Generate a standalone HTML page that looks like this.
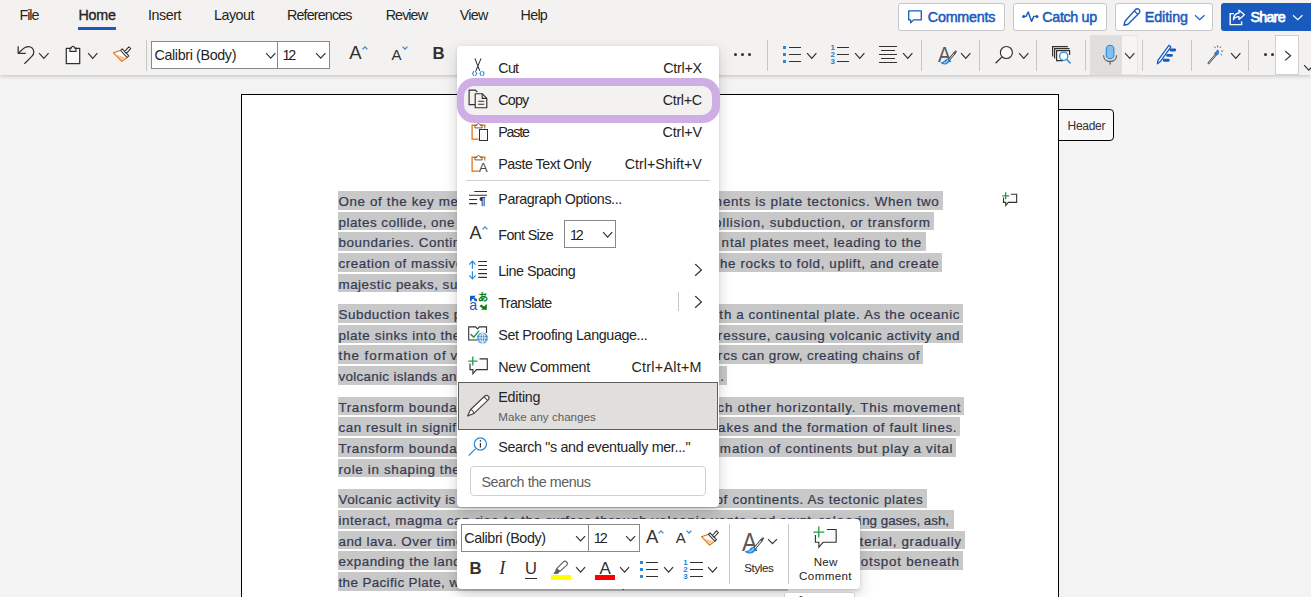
<!DOCTYPE html>
<html lang="en"><head><meta charset="utf-8"><title>Document - Word</title>
<style>
html,body{margin:0;padding:0;}
body{width:1311px;height:597px;overflow:hidden;background:#f3f3f3;font-family:"Liberation Sans",sans-serif;}
#root{position:relative;width:1311px;height:597px;overflow:hidden;}
.t{position:absolute;white-space:pre;}
.d{-webkit-text-stroke:.22px;}
.b{position:absolute;box-sizing:border-box;}
svg{overflow:visible;}

</style></head>
<body>
<div id="root">
<div class="b" style="left:241px;top:94px;width:818px;height:520px;background:#fff;border:1px solid #000;"></div>
<div class="b" style="left:1058px;top:109px;width:56px;height:32px;background:#f8f8f8;border:1px solid #000;border-radius:0 4px 4px 0;"></div>
<span class="t" style="letter-spacing:-0.272px;top:117.74px;font-size:12px;line-height:17px;color:#323130;left:1067.50px;">Header</span>
<div class="b" style="left:338.2px;top:191.0px;width:605.0px;height:18.6px;background:#c8c8c8;"></div>
<span class="t d" style="letter-spacing:0.629px;top:192.16px;font-size:13.4px;line-height:19px;color:#343a52;left:338.50px;">One of the key m</span>
<span class="t d" style="top:192.16px;font-size:13.4px;line-height:19px;color:#343a52;left:450.50px;letter-spacing:.5px;max-width:261.5px;overflow:hidden;">echanisms behind the formation of conti</span>
<span class="t d" style="top:192.16px;font-size:13.4px;line-height:19px;color:#343a52;right:588.60px;letter-spacing:.5px;">n</span>
<span class="t d" style="letter-spacing:0.653px;top:192.16px;font-size:13.4px;line-height:19px;color:#343a52;left:722.90px;">ents is plate tectonics. When two</span>
<div class="b" style="left:338.2px;top:211.7px;width:595.6px;height:18.6px;background:#c8c8c8;"></div>
<span class="t d" style="letter-spacing:0.483px;top:212.86px;font-size:13.4px;line-height:19px;color:#343a52;left:338.50px;">plates collide, one</span>
<span class="t d" style="top:212.86px;font-size:13.4px;line-height:19px;color:#343a52;left:455.00px;letter-spacing:.5px;max-width:257.0px;overflow:hidden;"> of three things can happen: continental c</span>
<span class="t d" style="top:212.86px;font-size:13.4px;line-height:19px;color:#343a52;right:589.00px;letter-spacing:.5px;">o</span>
<span class="t d" style="letter-spacing:0.690px;top:212.86px;font-size:13.4px;line-height:19px;color:#343a52;left:722.50px;">llision, subduction, or transform</span>
<div class="b" style="left:338.2px;top:232.3px;width:587.5px;height:18.6px;background:#c8c8c8;"></div>
<span class="t d" style="letter-spacing:0.546px;top:233.46px;font-size:13.4px;line-height:19px;color:#343a52;left:338.50px;">boundaries. Conti</span>
<span class="t d" style="top:233.46px;font-size:13.4px;line-height:19px;color:#343a52;left:452.80px;letter-spacing:.5px;max-width:259.2px;overflow:hidden;">nental collision occurs when two contine</span>
<span class="t d" style="top:233.46px;font-size:13.4px;line-height:19px;color:#343a52;right:581.60px;letter-spacing:.5px;">n</span>
<span class="t d" style="letter-spacing:0.549px;top:233.46px;font-size:13.4px;line-height:19px;color:#343a52;left:729.90px;">tal plates meet, leading to the</span>
<div class="b" style="left:338.2px;top:253.0px;width:604.0px;height:18.6px;background:#c8c8c8;"></div>
<span class="t d" style="letter-spacing:0.522px;top:254.16px;font-size:13.4px;line-height:19px;color:#343a52;left:338.50px;">creation of massiv</span>
<span class="t d" style="top:254.16px;font-size:13.4px;line-height:19px;color:#343a52;left:455.90px;letter-spacing:.5px;max-width:256.1px;overflow:hidden;">e mountain ranges. The pressure forces t</span>
<span class="t d" style="letter-spacing:0.615px;top:254.16px;font-size:13.4px;line-height:19px;color:#343a52;left:720.00px;">he rocks to fold, uplift, and create</span>
<div class="b" style="left:338.2px;top:273.7px;width:265.8px;height:18.6px;background:#c8c8c8;"></div>
<span class="t d" style="letter-spacing:0.506px;top:274.86px;font-size:13.4px;line-height:19px;color:#343a52;left:338.50px;">majestic peaks, s</span>
<span class="t d" style="top:274.86px;font-size:13.4px;line-height:19px;color:#343a52;left:449.90px;letter-spacing:.5px;max-width:262.1px;overflow:hidden;">uch as the Himalayas.</span>
<div class="b" style="left:338.2px;top:304.0px;width:624.8px;height:18.6px;background:#c8c8c8;"></div>
<span class="t d" style="letter-spacing:0.518px;top:305.16px;font-size:13.4px;line-height:19px;color:#343a52;left:338.50px;">Subduction takes</span>
<span class="t d" style="top:305.16px;font-size:13.4px;line-height:19px;color:#343a52;left:449.60px;letter-spacing:.5px;max-width:262.4px;overflow:hidden;"> place when an oceanic plate collides wi</span>
<span class="t d" style="top:305.16px;font-size:13.4px;line-height:19px;color:#343a52;right:587.60px;letter-spacing:.5px;">t</span>
<span class="t d" style="letter-spacing:0.586px;top:305.16px;font-size:13.4px;line-height:19px;color:#343a52;left:723.90px;">h a continental plate. As the oceanic</span>
<div class="b" style="left:338.2px;top:324.7px;width:624.8px;height:18.6px;background:#c8c8c8;"></div>
<span class="t d" style="letter-spacing:0.568px;top:325.86px;font-size:13.4px;line-height:19px;color:#343a52;left:338.50px;">plate sinks into th</span>
<span class="t d" style="top:325.86px;font-size:13.4px;line-height:19px;color:#343a52;left:452.80px;letter-spacing:.5px;max-width:259.2px;overflow:hidden;">e mantle, it generates intense heat and p</span>
<span class="t d" style="top:325.86px;font-size:13.4px;line-height:19px;color:#343a52;right:588.20px;letter-spacing:.5px;">r</span>
<span class="t d" style="letter-spacing:0.542px;top:325.86px;font-size:13.4px;line-height:19px;color:#343a52;left:723.30px;">essure, causing volcanic activity and</span>
<div class="b" style="left:338.2px;top:345.3px;width:584.8px;height:18.6px;background:#c8c8c8;"></div>
<span class="t d" style="letter-spacing:0.944px;top:346.46px;font-size:13.4px;line-height:19px;color:#343a52;left:338.50px;">the formation of</span>
<span class="t d" style="top:346.46px;font-size:13.4px;line-height:19px;color:#343a52;left:446.30px;letter-spacing:.5px;max-width:265.7px;overflow:hidden;"> volcanic arcs. Over time, these volcanic a</span>
<span class="t d" style="top:346.46px;font-size:13.4px;line-height:19px;color:#343a52;right:588.20px;letter-spacing:.5px;">r</span>
<span class="t d" style="letter-spacing:0.433px;top:346.46px;font-size:13.4px;line-height:19px;color:#343a52;left:723.30px;">cs can grow, creating chains of</span>
<div class="b" style="left:338.2px;top:366.0px;width:388.8px;height:18.6px;background:#c8c8c8;"></div>
<span class="t d" style="letter-spacing:0.311px;top:367.16px;font-size:13.4px;line-height:19px;color:#343a52;left:338.50px;">volcanic islands an</span>
<span class="t d" style="top:367.16px;font-size:13.4px;line-height:19px;color:#343a52;left:457.10px;letter-spacing:.5px;max-width:254.9px;overflow:hidden;">d eventually merging into larger landmasses</span>
<span class="t d" style="top:367.16px;font-size:13.4px;line-height:19px;color:#343a52;left:720.30px;">.</span>
<div class="b" style="left:338.2px;top:396.7px;width:625.8px;height:18.6px;background:#c8c8c8;"></div>
<span class="t d" style="letter-spacing:0.612px;top:397.86px;font-size:13.4px;line-height:19px;color:#343a52;left:338.50px;">Transform bounda</span>
<span class="t d" style="top:397.86px;font-size:13.4px;line-height:19px;color:#343a52;left:457.20px;letter-spacing:.5px;max-width:254.8px;overflow:hidden;">ries occur when two plates slide past ea</span>
<span class="t d" style="top:397.86px;font-size:13.4px;line-height:19px;color:#343a52;right:586.60px;letter-spacing:.5px;">c</span>
<span class="t d" style="letter-spacing:0.730px;top:397.86px;font-size:13.4px;line-height:19px;color:#343a52;left:724.90px;">h other horizontally. This movement</span>
<div class="b" style="left:338.2px;top:417.3px;width:621.8px;height:18.6px;background:#c8c8c8;"></div>
<span class="t d" style="letter-spacing:0.543px;top:418.46px;font-size:13.4px;line-height:19px;color:#343a52;left:338.50px;">can result in signif</span>
<span class="t d" style="top:418.46px;font-size:13.4px;line-height:19px;color:#343a52;left:456.60px;letter-spacing:.5px;max-width:255.4px;overflow:hidden;">icant seismic activity, including earthqu</span>
<span class="t d" style="top:418.46px;font-size:13.4px;line-height:19px;color:#343a52;right:585.00px;letter-spacing:.5px;">a</span>
<span class="t d" style="letter-spacing:0.620px;top:418.46px;font-size:13.4px;line-height:19px;color:#343a52;left:726.50px;">kes and the formation of fault lines.</span>
<div class="b" style="left:338.2px;top:438.0px;width:617.8px;height:18.6px;background:#c8c8c8;"></div>
<span class="t d" style="letter-spacing:0.612px;top:439.16px;font-size:13.4px;line-height:19px;color:#343a52;left:338.50px;">Transform bounda</span>
<span class="t d" style="top:439.16px;font-size:13.4px;line-height:19px;color:#343a52;left:457.20px;letter-spacing:.5px;max-width:254.8px;overflow:hidden;">ries do not directly contribute to the for</span>
<span class="t d" style="top:439.16px;font-size:13.4px;line-height:19px;color:#343a52;right:579.60px;letter-spacing:.5px;">m</span>
<span class="t d" style="letter-spacing:0.645px;top:439.16px;font-size:13.4px;line-height:19px;color:#343a52;left:731.90px;">ation of continents but play a vital</span>
<div class="b" style="left:338.2px;top:458.7px;width:225.8px;height:18.6px;background:#c8c8c8;"></div>
<span class="t d" style="letter-spacing:0.659px;top:459.86px;font-size:13.4px;line-height:19px;color:#343a52;left:338.50px;">role in shaping th</span>
<span class="t d" style="top:459.86px;font-size:13.4px;line-height:19px;color:#343a52;left:452.30px;letter-spacing:.5px;max-width:259.7px;overflow:hidden;">e Earth's surface.</span>
<div class="b" style="left:338.2px;top:489.3px;width:588.8px;height:18.6px;background:#c8c8c8;"></div>
<span class="t d" style="letter-spacing:0.467px;top:490.46px;font-size:13.4px;line-height:19px;color:#343a52;left:338.50px;">Volcanic activity is</span>
<span class="t d" style="top:490.46px;font-size:13.4px;line-height:19px;color:#343a52;left:455.90px;letter-spacing:.5px;max-width:256.1px;overflow:hidden;"> another key factor in the formation </span>
<span class="t d" style="top:490.46px;font-size:13.4px;line-height:19px;color:#343a52;right:579.00px;letter-spacing:.5px;">of </span>
<span class="t d" style="letter-spacing:0.603px;top:490.46px;font-size:13.4px;line-height:19px;color:#343a52;left:732.50px;">continents. As tectonic plates</span>
<div class="b" style="left:338.2px;top:510.0px;width:615.5px;height:18.6px;background:#c8c8c8;"></div>
<span class="t d" style="letter-spacing:0.536px;top:511.16px;font-size:13.4px;line-height:19px;color:#343a52;left:338.50px;">interact, magma c</span>
<span class="t d" style="letter-spacing:0.733px;top:511.16px;font-size:13.4px;line-height:19px;color:#343a52;left:454.10px;">an rise to the </span>
<span class="t d" style="letter-spacing:0.351px;top:511.16px;font-size:13.4px;line-height:19px;color:#343a52;left:545.50px;">surface </span>
<span class="t d" style="letter-spacing:0.966px;top:511.16px;font-size:13.4px;line-height:19px;color:#343a52;left:595.60px;">through </span>
<span class="t d" style="letter-spacing:0.924px;top:511.16px;font-size:13.4px;line-height:19px;color:#343a52;left:651.50px;">volcanic </span>
<span class="t d" style="letter-spacing:0.756px;top:511.16px;font-size:13.4px;line-height:19px;color:#343a52;left:711.00px;">vents and </span>
<span class="t d" style="letter-spacing:0.239px;top:511.16px;font-size:13.4px;line-height:19px;color:#343a52;left:779.60px;">erupt, </span>
<span class="t d" style="letter-spacing:0.983px;top:511.16px;font-size:13.4px;line-height:19px;color:#343a52;left:819.00px;">releas</span>
<span class="t d" style="top:511.16px;font-size:13.4px;line-height:19px;color:#343a52;right:449.30px;letter-spacing:.5px;">i</span>
<span class="t d" style="letter-spacing:-0.016px;top:511.16px;font-size:13.4px;line-height:19px;color:#343a52;left:862.20px;">ng gases, ash,</span>
<div class="b" style="left:338.2px;top:530.7px;width:626.4px;height:18.6px;background:#c8c8c8;"></div>
<span class="t d" style="letter-spacing:0.479px;top:531.86px;font-size:13.4px;line-height:19px;color:#343a52;left:338.50px;">and lava. Over tim</span>
<span class="t d" style="top:531.86px;font-size:13.4px;line-height:19px;color:#343a52;left:455.90px;letter-spacing:.5px;max-width:256.1px;overflow:hidden;">e, these eruptions build up layers of new ma</span>
<span class="t d" style="top:531.86px;font-size:13.4px;line-height:19px;color:#343a52;right:447.30px;letter-spacing:.5px;">t</span>
<span class="t d" style="letter-spacing:0.647px;top:531.86px;font-size:13.4px;line-height:19px;color:#343a52;left:864.20px;">erial, gradually</span>
<div class="b" style="left:338.2px;top:551.3px;width:624.8px;height:18.6px;background:#c8c8c8;"></div>
<span class="t d" style="letter-spacing:0.523px;top:552.46px;font-size:13.4px;line-height:19px;color:#343a52;left:338.50px;">expanding the lan</span>
<span class="t d" style="top:552.46px;font-size:13.4px;line-height:19px;color:#343a52;left:453.20px;letter-spacing:.5px;max-width:258.8px;overflow:hidden;">dmass. The Hawaiian Islands formed over a h</span>
<span class="t d" style="letter-spacing:0.738px;top:552.46px;font-size:13.4px;line-height:19px;color:#343a52;left:860.80px;">otspot beneath</span>
<div class="b" style="left:338.2px;top:572.0px;width:449.8px;height:18.6px;background:#c8c8c8;"></div>
<span class="t d" style="letter-spacing:0.385px;top:573.16px;font-size:13.4px;line-height:19px;color:#343a52;left:338.50px;">the Pacific Plate,</span>
<span class="t d" style="top:573.16px;font-size:13.4px;line-height:19px;color:#343a52;left:445.40px;letter-spacing:.5px;max-width:266.6px;overflow:hidden;"> which continues to fuel eruptions.</span>
<div class="b" style="left:0px;top:0px;width:1311px;height:75px;background:#f3f2f1;box-shadow:0 1px 4px rgba(0,0,0,.22);"></div>
<span class="t" style="letter-spacing:-0.982px;top:4.75px;font-size:14.3px;line-height:20px;color:#252423;left:19.40px;">File</span>
<span class="t" style="letter-spacing:-0.180px;top:4.75px;font-size:14.3px;line-height:20px;color:#252423;left:78.40px;-webkit-text-stroke:.35px;">Home</span>
<span class="t" style="letter-spacing:-0.493px;top:4.75px;font-size:14.3px;line-height:20px;color:#252423;left:148.10px;">Insert</span>
<span class="t" style="letter-spacing:-0.528px;top:4.75px;font-size:14.3px;line-height:20px;color:#252423;left:214.10px;">Layout</span>
<span class="t" style="letter-spacing:-0.847px;top:4.75px;font-size:14.3px;line-height:20px;color:#252423;left:287.00px;">References</span>
<span class="t" style="letter-spacing:-0.918px;top:4.75px;font-size:14.3px;line-height:20px;color:#252423;left:385.70px;">Review</span>
<span class="t" style="letter-spacing:-0.678px;top:4.75px;font-size:14.3px;line-height:20px;color:#252423;left:459.70px;">View</span>
<span class="t" style="letter-spacing:-0.735px;top:4.75px;font-size:14.3px;line-height:20px;color:#252423;left:520.60px;">Help</span>
<div class="b" style="left:78px;top:26.9px;width:38.2px;height:3px;background:#185abd;border-radius:.5px;"></div>
<div class="b" style="left:898px;top:3px;width:107px;height:28px;background:#fff;border:1px solid #c8c6c4;border-radius:3px;"></div>
<span class="t" style="letter-spacing:-0.218px;top:6.85px;font-size:14.3px;line-height:20px;color:#185abd;left:927.80px;-webkit-text-stroke:.5px;">Comments</span>
<div class="b" style="left:1013px;top:3px;width:94px;height:28px;background:#fff;border:1px solid #c8c6c4;border-radius:3px;"></div>
<span class="t" style="letter-spacing:-0.333px;top:6.85px;font-size:14.3px;line-height:20px;color:#185abd;left:1042.30px;-webkit-text-stroke:.5px;">Catch up</span>
<div class="b" style="left:1115px;top:3px;width:98px;height:28px;background:#fff;border:1px solid #c8c6c4;border-radius:3px;"></div>
<span class="t" style="letter-spacing:-0.070px;top:6.85px;font-size:14.3px;line-height:20px;color:#185abd;left:1144.70px;-webkit-text-stroke:.5px;">Editing</span>
<svg class="b" style="left:1195px;top:14.5px;" width="9.5" height="6" viewBox="0 0 9.5 6" fill="none"><path d="M0.5 0.6 L4.75 4.6 L9.0 0.6" stroke="#185abd" stroke-width="1.2" stroke-linecap="square"/></svg>
<div class="b" style="left:1221px;top:3px;width:100px;height:28px;background:#185abd;border-radius:3px;"></div>
<span class="t" style="letter-spacing:-0.739px;top:6.85px;font-size:14.3px;line-height:20px;color:#fff;left:1250.40px;-webkit-text-stroke:.75px;">Share</span>
<svg class="b" style="left:1293px;top:14.5px;" width="9.5" height="6" viewBox="0 0 9.5 6" fill="none"><path d="M0.5 0.6 L4.75 4.6 L9.0 0.6" stroke="#fff" stroke-width="1.2" stroke-linecap="square"/></svg>
<div class="b" style="left:146px;top:39.5px;width:1px;height:31px;background:#c8c6c4;"></div>
<div class="b" style="left:767px;top:39.5px;width:1px;height:31px;background:#c8c6c4;"></div>
<div class="b" style="left:921px;top:39.5px;width:1px;height:31px;background:#c8c6c4;"></div>
<div class="b" style="left:979px;top:39.5px;width:1px;height:31px;background:#c8c6c4;"></div>
<div class="b" style="left:1036px;top:39.5px;width:1px;height:31px;background:#c8c6c4;"></div>
<div class="b" style="left:1085px;top:39.5px;width:1px;height:31px;background:#c8c6c4;"></div>
<div class="b" style="left:1142px;top:39.5px;width:1px;height:31px;background:#c8c6c4;"></div>
<div class="b" style="left:1191px;top:39.5px;width:1px;height:31px;background:#c8c6c4;"></div>
<div class="b" style="left:1248px;top:39.5px;width:1px;height:31px;background:#c8c6c4;"></div>
<div class="b" style="left:151px;top:41px;width:127px;height:28px;background:#fff;border:1px solid #8a8886;"></div>
<div class="b" style="left:277px;top:41px;width:53.2px;height:28px;background:#fff;border:1px solid #8a8886;"></div>
<span class="t" style="letter-spacing:-0.362px;top:45.35px;font-size:14.3px;line-height:20px;color:#252423;left:154.50px;">Calibri (Body)</span>
<span class="t" style="letter-spacing:-2.106px;top:45.35px;font-size:14.3px;line-height:20px;color:#252423;left:282.50px;">12</span>
<svg class="b" style="left:265.5px;top:52.5px;" width="9.5" height="6.5" viewBox="0 0 9.5 6.5" fill="none"><path d="M0.5 0.6 L4.75 5.1 L9.0 0.6" stroke="#323130" stroke-width="1.2" stroke-linecap="square"/></svg>
<svg class="b" style="left:316px;top:52.5px;" width="9.5" height="6.5" viewBox="0 0 9.5 6.5" fill="none"><path d="M0.5 0.6 L4.75 5.1 L9.0 0.6" stroke="#323130" stroke-width="1.2" stroke-linecap="square"/></svg>
<svg class="b" style="left:39.4px;top:52.5px;" width="9.7" height="6.8" viewBox="0 0 9.7 6.8" fill="none"><path d="M0.5 0.6 L4.85 5.3999999999999995 L9.2 0.6" stroke="#323130" stroke-width="1.2" stroke-linecap="square"/></svg>
<svg class="b" style="left:87.8px;top:52.5px;" width="9.5" height="6.8" viewBox="0 0 9.5 6.8" fill="none"><path d="M0.5 0.6 L4.75 5.3999999999999995 L9.0 0.6" stroke="#323130" stroke-width="1.2" stroke-linecap="square"/></svg>
<span class="t" style="letter-spacing:-0.144px;top:40.29px;font-size:18.5px;line-height:26px;color:#323130;left:349.30px;">A</span>
<svg class="b" style="left:361.9px;top:46.3px;" width="6" height="4" viewBox="0 0 6 4" fill="none"><path d="M0.6 3.4L3 0.8L5.4 3.4" stroke="#2b88d8" stroke-width="1.2"/></svg>
<span class="t" style="letter-spacing:-0.316px;top:44.00px;font-size:15px;line-height:21px;color:#323130;left:391.60px;">A</span>
<svg class="b" style="left:401.8px;top:46.3px;" width="6" height="4" viewBox="0 0 6 4" fill="none"><path d="M0.6 0.6L3 3.2L5.4 0.6" stroke="#2b88d8" stroke-width="1.2"/></svg>
<span class="t" style="top:41.98px;font-size:16.8px;line-height:24px;color:#323130;left:432.50px;font-weight:700;">B</span>
<div class="b" style="left:733.7px;top:52.8px;width:3px;height:3px;background:#323130;border-radius:50%;"></div>
<div class="b" style="left:740.9px;top:52.8px;width:3px;height:3px;background:#323130;border-radius:50%;"></div>
<div class="b" style="left:748.1px;top:52.8px;width:3px;height:3px;background:#323130;border-radius:50%;"></div>
<div class="b" style="left:783px;top:46.0px;width:3.3px;height:3.3px;background:#2b88d8;"></div>
<div class="b" style="left:789px;top:47.0px;width:12px;height:1.1px;background:#323130;"></div>
<div class="b" style="left:783px;top:52.699999999999996px;width:3.3px;height:3.3px;background:#2b88d8;"></div>
<div class="b" style="left:789px;top:53.699999999999996px;width:12px;height:1.1px;background:#323130;"></div>
<div class="b" style="left:783px;top:60.1px;width:3.3px;height:3.3px;background:#2b88d8;"></div>
<div class="b" style="left:789px;top:61.1px;width:12px;height:1.1px;background:#323130;"></div>
<svg class="b" style="left:806.8px;top:52.5px;" width="9.5" height="6.8" viewBox="0 0 9.5 6.8" fill="none"><path d="M0.5 0.6 L4.75 5.3999999999999995 L9.0 0.6" stroke="#323130" stroke-width="1.2" stroke-linecap="square"/></svg>
<span class="t" style="top:42.33px;font-size:8px;line-height:11px;color:#1f80d4;left:830.40px;font-weight:700;">1</span>
<div class="b" style="left:837px;top:47.0px;width:12px;height:1.1px;background:#323130;"></div>
<span class="t" style="top:49.03px;font-size:8px;line-height:11px;color:#1f80d4;left:830.40px;font-weight:700;">2</span>
<div class="b" style="left:837px;top:53.699999999999996px;width:12px;height:1.1px;background:#323130;"></div>
<span class="t" style="top:56.43px;font-size:8px;line-height:11px;color:#1f80d4;left:830.40px;font-weight:700;">3</span>
<div class="b" style="left:837px;top:61.1px;width:12px;height:1.1px;background:#323130;"></div>
<svg class="b" style="left:854.6px;top:52.5px;" width="9.5" height="6.8" viewBox="0 0 9.5 6.8" fill="none"><path d="M0.5 0.6 L4.75 5.3999999999999995 L9.0 0.6" stroke="#323130" stroke-width="1.2" stroke-linecap="square"/></svg>
<div class="b" style="left:879px;top:45.8px;width:18px;height:1.1px;background:#323130;"></div>
<div class="b" style="left:881px;top:49.8px;width:14px;height:1.1px;background:#323130;"></div>
<div class="b" style="left:879px;top:53.8px;width:18px;height:1.1px;background:#323130;"></div>
<div class="b" style="left:881px;top:57.8px;width:14px;height:1.1px;background:#323130;"></div>
<div class="b" style="left:879px;top:62.0px;width:18px;height:1.1px;background:#323130;"></div>
<svg class="b" style="left:902.6px;top:52.5px;" width="9.5" height="6.8" viewBox="0 0 9.5 6.8" fill="none"><path d="M0.5 0.6 L4.75 5.3999999999999995 L9.0 0.6" stroke="#323130" stroke-width="1.2" stroke-linecap="square"/></svg>
<svg class="b" style="left:960.6px;top:52.5px;" width="9.5" height="6.8" viewBox="0 0 9.5 6.8" fill="none"><path d="M0.5 0.6 L4.75 5.3999999999999995 L9.0 0.6" stroke="#323130" stroke-width="1.2" stroke-linecap="square"/></svg>
<svg class="b" style="left:1018.7px;top:52.5px;" width="9.5" height="6.8" viewBox="0 0 9.5 6.8" fill="none"><path d="M0.5 0.6 L4.75 5.3999999999999995 L9.0 0.6" stroke="#323130" stroke-width="1.2" stroke-linecap="square"/></svg>
<div class="b" style="left:1090px;top:35px;width:32px;height:39.5px;background:#e1dfdd;"></div>
<div class="b" style="left:1122px;top:35px;width:16px;height:39.5px;background:#f6f5f4;border:1px solid #e8e6e4;border-left:none;"></div>
<svg class="b" style="left:1124.7px;top:52.5px;" width="9.5" height="6.8" viewBox="0 0 9.5 6.8" fill="none"><path d="M0.5 0.6 L4.75 5.3999999999999995 L9.0 0.6" stroke="#323130" stroke-width="1.2" stroke-linecap="square"/></svg>
<svg class="b" style="left:1230.6px;top:52.5px;" width="9.5" height="6.8" viewBox="0 0 9.5 6.8" fill="none"><path d="M0.5 0.6 L4.75 5.3999999999999995 L9.0 0.6" stroke="#323130" stroke-width="1.2" stroke-linecap="square"/></svg>
<div class="b" style="left:1264.0px;top:52.8px;width:3px;height:3px;background:#323130;border-radius:50%;"></div>
<div class="b" style="left:1270.7px;top:52.8px;width:3px;height:3px;background:#323130;border-radius:50%;"></div>
<div class="b" style="left:1275px;top:35px;width:24px;height:39.5px;background:#fff;border:1px solid #d2d0ce;"></div>
<svg class="b" style="left:1284.8px;top:50.8px;" width="7" height="9.5" viewBox="0 0 7 9.5" fill="none"><path d="M0.6 0.5 L5.6 4.75 L0.6 9.0" stroke="#323130" stroke-width="1.2" stroke-linecap="square"/></svg>
<svg class="b" style="left:1303.8px;top:65px;" width="9.5" height="6.6" viewBox="0 0 9.5 6.6" fill="none"><path d="M0.5 0.6 L4.75 5.199999999999999 L9.0 0.6" stroke="#323130" stroke-width="1.2" stroke-linecap="square"/></svg>
<div class="b" style="left:457px;top:46px;width:261.8px;height:461px;background:#fff;border-radius:4px;box-shadow:0 6.4px 14.4px rgba(0,0,0,.16),0 1.2px 3.6px rgba(0,0,0,.12);"></div>
<span class="t" style="letter-spacing:-0.725px;top:57.75px;font-size:14.3px;line-height:20px;color:#252423;left:498.30px;">Cut</span>
<span class="t" style="letter-spacing:-0.245px;top:57.75px;font-size:14.3px;line-height:20px;color:#252423;right:609.20px;">Ctrl+X</span>
<div class="b" style="left:456.5px;top:78px;width:263.5px;height:44.5px;background:#cfaee6;border-radius:17px;"></div>
<div class="b" style="left:464px;top:86px;width:248px;height:28.5px;background:#f3f2f1;border-radius:10px;"></div>
<span class="t" style="letter-spacing:-0.830px;top:89.85px;font-size:14.3px;line-height:20px;color:#252423;left:498.30px;">Copy</span>
<span class="t" style="letter-spacing:-0.304px;top:89.85px;font-size:14.3px;line-height:20px;color:#252423;right:609.20px;">Ctrl+C</span>
<span class="t" style="letter-spacing:-1.216px;top:121.75px;font-size:14.3px;line-height:20px;color:#252423;left:498.30px;">Paste</span>
<span class="t" style="letter-spacing:-0.145px;top:121.75px;font-size:14.3px;line-height:20px;color:#252423;right:609.20px;">Ctrl+V</span>
<span class="t" style="letter-spacing:-0.491px;top:153.95px;font-size:14.3px;line-height:20px;color:#252423;left:498.30px;">Paste Text Only</span>
<span class="t" style="letter-spacing:0.002px;top:153.95px;font-size:14.3px;line-height:20px;color:#252423;right:609.20px;">Ctrl+Shift+V</span>
<div class="b" style="left:466.4px;top:180px;width:243.2px;height:1px;background:#d2d0ce;"></div>
<span class="t" style="letter-spacing:-0.423px;top:188.95px;font-size:14.3px;line-height:20px;color:#252423;left:498.30px;">Paragraph Options...</span>
<span class="t" style="letter-spacing:-0.638px;top:224.55px;font-size:14.3px;line-height:20px;color:#252423;left:498.30px;">Font Size</span>
<div class="b" style="left:564.3px;top:220px;width:51.4px;height:27.6px;background:#fff;border:1px solid #8a8886;"></div>
<span class="t" style="letter-spacing:-2.106px;top:224.55px;font-size:14.3px;line-height:20px;color:#252423;left:569.90px;">12</span>
<svg class="b" style="left:602.8px;top:231.5px;" width="9.3" height="6.6" viewBox="0 0 9.3 6.6" fill="none"><path d="M0.5 0.6 L4.65 5.199999999999999 L8.8 0.6" stroke="#323130" stroke-width="1.2" stroke-linecap="square"/></svg>
<span class="t" style="letter-spacing:-0.116px;top:220.76px;font-size:18px;line-height:25px;color:#323130;left:469.60px;">A</span>
<svg class="b" style="left:481.5px;top:226px;" width="6" height="4" viewBox="0 0 6 4" fill="none"><path d="M0.6 3.4L3 0.8L5.4 3.4" stroke="#2b88d8" stroke-width="1.2"/></svg>
<span class="t" style="letter-spacing:-0.479px;top:261.05px;font-size:14.3px;line-height:20px;color:#252423;left:498.30px;">Line Spacing</span>
<svg class="b" style="left:694.8px;top:263.7px;" width="7.8" height="11.8" viewBox="0 0 7.8 11.8" fill="none"><path d="M0.6 0.5 L6.3999999999999995 5.9 L0.6 11.3" stroke="#323130" stroke-width="1.2" stroke-linecap="square"/></svg>
<span class="t" style="letter-spacing:-0.635px;top:292.65px;font-size:14.3px;line-height:20px;color:#252423;left:498.30px;">Translate</span>
<div class="b" style="left:678px;top:292.3px;width:1px;height:19px;background:#c8c6c4;"></div>
<svg class="b" style="left:694.8px;top:295.6px;" width="7.8" height="11.8" viewBox="0 0 7.8 11.8" fill="none"><path d="M0.6 0.5 L6.3999999999999995 5.9 L0.6 11.3" stroke="#323130" stroke-width="1.2" stroke-linecap="square"/></svg>
<span class="t" style="letter-spacing:-0.378px;top:325.25px;font-size:14.3px;line-height:20px;color:#252423;left:498.30px;">Set Proofing Language...</span>
<span class="t" style="letter-spacing:-0.255px;top:356.65px;font-size:14.3px;line-height:20px;color:#252423;left:498.30px;">New Comment</span>
<span class="t" style="letter-spacing:0.285px;top:356.65px;font-size:14.3px;line-height:20px;color:#252423;right:609.20px;">Ctrl+Alt+M</span>
<div class="b" style="left:458px;top:382.4px;width:259.6px;height:47.6px;background:#e1dfdd;border:1px solid #605e5c;"></div>
<span class="t" style="letter-spacing:-0.253px;top:386.75px;font-size:14.3px;line-height:20px;color:#252423;left:498.30px;">Editing</span>
<span class="t" style="letter-spacing:0.011px;top:408.58px;font-size:11.6px;line-height:16px;color:#605e5c;left:498.30px;">Make any changes</span>
<span class="t" style="letter-spacing:-0.331px;top:437.05px;font-size:14.3px;line-height:20px;color:#252423;left:498.30px;">Search "s and eventually mer..."</span>
<div class="b" style="left:470.2px;top:466px;width:235.6px;height:30px;background:#fff;border:1px solid #d2d0ce;border-radius:4px;"></div>
<span class="t" style="letter-spacing:-0.449px;top:471.75px;font-size:14.3px;line-height:20px;color:#605e5c;left:481.50px;">Search the menus</span>
<div class="b" style="left:457px;top:519px;width:402.8px;height:69.7px;background:#fff;border-radius:4px;box-shadow:0 6.4px 14.4px rgba(0,0,0,.16),0 1.2px 3.6px rgba(0,0,0,.12);"></div>
<div class="b" style="left:461px;top:524px;width:128px;height:28px;background:#fff;border:1px solid #8a8886;"></div>
<div class="b" style="left:588px;top:524px;width:52px;height:28px;background:#fff;border:1px solid #8a8886;"></div>
<span class="t" style="letter-spacing:-0.362px;top:528.45px;font-size:14.3px;line-height:20px;color:#252423;left:464.20px;">Calibri (Body)</span>
<span class="t" style="letter-spacing:-2.106px;top:528.45px;font-size:14.3px;line-height:20px;color:#252423;left:593.80px;">12</span>
<svg class="b" style="left:575.7px;top:535.7px;" width="9.2" height="6.4" viewBox="0 0 9.2 6.4" fill="none"><path d="M0.5 0.6 L4.6 5.0 L8.7 0.6" stroke="#323130" stroke-width="1.2" stroke-linecap="square"/></svg>
<svg class="b" style="left:626.4px;top:535.7px;" width="9.2" height="6.4" viewBox="0 0 9.2 6.4" fill="none"><path d="M0.5 0.6 L4.6 5.0 L8.7 0.6" stroke="#323130" stroke-width="1.2" stroke-linecap="square"/></svg>
<span class="t" style="letter-spacing:-0.144px;top:523.59px;font-size:18.5px;line-height:26px;color:#323130;left:646.00px;">A</span>
<svg class="b" style="left:658px;top:529.6px;" width="6" height="4" viewBox="0 0 6 4" fill="none"><path d="M0.6 3.4L3 0.8L5.4 3.4" stroke="#2b88d8" stroke-width="1.2"/></svg>
<span class="t" style="letter-spacing:-0.316px;top:527.30px;font-size:15px;line-height:21px;color:#323130;left:675.70px;">A</span>
<svg class="b" style="left:685.6px;top:529.6px;" width="6" height="4" viewBox="0 0 6 4" fill="none"><path d="M0.6 0.6L3 3.2L5.4 0.6" stroke="#2b88d8" stroke-width="1.2"/></svg>
<span class="t" style="top:556.78px;font-size:16.8px;line-height:24px;color:#323130;left:469.40px;font-weight:700;">B</span>
<span class="t" style="top:555.19px;font-size:18.5px;line-height:26px;color:#323130;left:499.30px;font-family:'Liberation Serif',serif;font-style:italic;">I</span>
<span class="t" style="letter-spacing:-0.222px;top:557.38px;font-size:16.5px;line-height:23px;color:#323130;left:525.10px;">U</span>
<div class="b" style="left:525px;top:577.6px;width:12px;height:1.1px;background:#323130;"></div>
<div class="b" style="left:551px;top:575px;width:20px;height:4.8px;background:#ffff00;"></div>
<svg class="b" style="left:575.7px;top:567px;" width="9.2" height="6.6" viewBox="0 0 9.2 6.6" fill="none"><path d="M0.5 0.6 L4.6 5.199999999999999 L8.7 0.6" stroke="#323130" stroke-width="1.2" stroke-linecap="square"/></svg>
<span class="t" style="letter-spacing:-0.544px;top:556.71px;font-size:17px;line-height:24px;color:#323130;left:599.50px;">A</span>
<div class="b" style="left:595px;top:575px;width:20px;height:4.8px;background:#ff0000;"></div>
<svg class="b" style="left:619.7px;top:567px;" width="9.2" height="6.6" viewBox="0 0 9.2 6.6" fill="none"><path d="M0.5 0.6 L4.6 5.199999999999999 L8.7 0.6" stroke="#323130" stroke-width="1.2" stroke-linecap="square"/></svg>
<div class="b" style="left:639.8px;top:560.6px;width:3.3px;height:3.3px;background:#2b88d8;"></div>
<div class="b" style="left:645.5px;top:561.6px;width:12.5px;height:1.1px;background:#323130;"></div>
<div class="b" style="left:639.8px;top:567.6px;width:3.3px;height:3.3px;background:#2b88d8;"></div>
<div class="b" style="left:645.5px;top:568.6px;width:12.5px;height:1.1px;background:#323130;"></div>
<div class="b" style="left:639.8px;top:575.0px;width:3.3px;height:3.3px;background:#2b88d8;"></div>
<div class="b" style="left:645.5px;top:576.0px;width:12.5px;height:1.1px;background:#323130;"></div>
<svg class="b" style="left:663.6px;top:567px;" width="9.2" height="6.6" viewBox="0 0 9.2 6.6" fill="none"><path d="M0.5 0.6 L4.6 5.199999999999999 L8.7 0.6" stroke="#323130" stroke-width="1.2" stroke-linecap="square"/></svg>
<span class="t" style="top:556.93px;font-size:8px;line-height:11px;color:#1f80d4;left:683.20px;font-weight:700;">1</span>
<div class="b" style="left:690px;top:561.6px;width:12.5px;height:1.1px;background:#323130;"></div>
<span class="t" style="top:563.93px;font-size:8px;line-height:11px;color:#1f80d4;left:683.20px;font-weight:700;">2</span>
<div class="b" style="left:690px;top:568.6px;width:12.5px;height:1.1px;background:#323130;"></div>
<span class="t" style="top:571.33px;font-size:8px;line-height:11px;color:#1f80d4;left:683.20px;font-weight:700;">3</span>
<div class="b" style="left:690px;top:576.0px;width:12.5px;height:1.1px;background:#323130;"></div>
<svg class="b" style="left:707.6px;top:567px;" width="9.2" height="6.6" viewBox="0 0 9.2 6.6" fill="none"><path d="M0.5 0.6 L4.6 5.199999999999999 L8.7 0.6" stroke="#323130" stroke-width="1.2" stroke-linecap="square"/></svg>
<div class="b" style="left:729px;top:524px;width:1px;height:60px;background:#c8c6c4;"></div>
<div class="b" style="left:788.3px;top:524px;width:1px;height:60px;background:#c8c6c4;"></div>
<svg class="b" style="left:768.2px;top:539.1px;" width="9" height="6" viewBox="0 0 9 6" fill="none"><path d="M0.5 0.6 L4.5 4.6 L8.5 0.6" stroke="#323130" stroke-width="1.2" stroke-linecap="square"/></svg>
<span class="t" style="letter-spacing:-0.376px;top:559.58px;font-size:11.6px;line-height:16px;color:#252423;left:744.20px;">Styles</span>
<span class="t" style="letter-spacing:0.198px;top:554.38px;font-size:11.6px;line-height:16px;color:#252423;left:813.70px;">New</span>
<span class="t" style="letter-spacing:0.356px;top:568.08px;font-size:11.6px;line-height:16px;color:#252423;left:799.10px;">Comment</span>
<div class="b" style="left:784.2px;top:592.3px;width:71px;height:10px;background:#fff;border:1px solid #d2d0ce;border-radius:2px;"></div>
<svg class="b" style="left:17.2px;top:45px;" width="18" height="20" viewBox="0 0 18 20" fill="none"><path d="M1.2 1.3V8.4H8.8" stroke="#323130" stroke-width="1.25"/><path d="M1.6 8L6.6 3.4C8 2.2 9.6 1.5 11.5 1.5C14.5 1.5 16.8 3.9 16.8 6.9C16.8 8.6 16 10.2 14.8 11.4L7.4 18.8" stroke="#323130" stroke-width="1.25"/></svg>
<svg class="b" style="left:65px;top:45px;" width="16" height="20" viewBox="0 0 16 20" fill="none"><rect x="1.3" y="3.4" width="13.4" height="15.2" fill="#fafafa" stroke="#323130" stroke-width="1.25"/><path d="M5 6.4V3.2H6.3C6.5 2 7.2 1.4 8 1.4C8.8 1.4 9.5 2 9.7 3.2H11V6.4Z" fill="#fafafa" stroke="#323130" stroke-width="1.2"/></svg>
<svg class="b" style="left:113.3px;top:45.6px;" width="19.0" height="17.0" viewBox="0 0 19 17" fill="none"><path d="M0.5 6.8L7.8 4.3L14.3 11.3L8.8 15.4Z" fill="#fff" stroke="#de6c00" stroke-width="1.1" stroke-linejoin="round"/><path d="M2.4 8.4L12.6 11.6L8.9 14.4Z" fill="#f9c68c"/><path d="M7.6 4.5L9.2 2.9L15.8 9.9L14.2 11.5Z" fill="#fff" stroke="#323130" stroke-width="1.05" stroke-linejoin="round"/><path d="M11.6 5.6L15.8 0.9L17.7 2.6L13.4 7.4Z" fill="#fff" stroke="#323130" stroke-width="1.05" stroke-linejoin="round"/></svg>
<svg class="b" style="left:701.3px;top:529.8px;" width="18.62" height="16.66" viewBox="0 0 19 17" fill="none"><path d="M0.5 6.8L7.8 4.3L14.3 11.3L8.8 15.4Z" fill="#fff" stroke="#de6c00" stroke-width="1.1" stroke-linejoin="round"/><path d="M2.4 8.4L12.6 11.6L8.9 14.4Z" fill="#f9c68c"/><path d="M7.6 4.5L9.2 2.9L15.8 9.9L14.2 11.5Z" fill="#fff" stroke="#323130" stroke-width="1.05" stroke-linejoin="round"/><path d="M11.6 5.6L15.8 0.9L17.7 2.6L13.4 7.4Z" fill="#fff" stroke="#323130" stroke-width="1.05" stroke-linejoin="round"/></svg>
<span class="t" style="top:42.52px;font-size:21.6px;line-height:24px;color:#5a5856;left:938.20px;transform:scaleX(.9);transform-origin:0 0;">A</span>
<svg class="b" style="left:938px;top:46.3px;" width="20.0" height="19.0" viewBox="0 0 20 19" fill="none"><path d="M17.3 6.3L11.2 13.6" stroke="#323130" stroke-width="2.3"/><path d="M17 6.7L11.2 13.6" stroke="#fff" stroke-width="0.9"/><path d="M17.9 5.5L16.6 7.1" stroke="#605e5c" stroke-width="2" stroke-linecap="round"/><path d="M2.2 16.4C4.7 16.4 6.2 15.2 7.2 13.8C8.4 12.4 10.4 12.6 11.2 13.8C12 15.4 10.6 17.6 8.2 18.2C5.8 18.8 3.4 18 2.2 16.4Z" fill="#2b88d8"/><path d="M6.4 16.8C7.6 16.6 9 15.6 9.6 14.4" stroke="#9fd0f5" stroke-width="1.2" stroke-linecap="round"/></svg>
<span class="t" style="top:527.71px;font-size:25.27px;line-height:28px;color:#5a5856;left:742.23px;transform:scaleX(.9);transform-origin:0 0;">A</span>
<svg class="b" style="left:742px;top:532.1px;" width="23.4" height="22.23" viewBox="0 0 20 19" fill="none"><path d="M17.3 6.3L11.2 13.6" stroke="#323130" stroke-width="2.3"/><path d="M17 6.7L11.2 13.6" stroke="#fff" stroke-width="0.9"/><path d="M17.9 5.5L16.6 7.1" stroke="#605e5c" stroke-width="2" stroke-linecap="round"/><path d="M2.2 16.4C4.7 16.4 6.2 15.2 7.2 13.8C8.4 12.4 10.4 12.6 11.2 13.8C12 15.4 10.6 17.6 8.2 18.2C5.8 18.8 3.4 18 2.2 16.4Z" fill="#2b88d8"/><path d="M6.4 16.8C7.6 16.6 9 15.6 9.6 14.4" stroke="#9fd0f5" stroke-width="1.2" stroke-linecap="round"/></svg>
<svg class="b" style="left:995px;top:45px;" width="19" height="20" viewBox="0 0 19 20" fill="none"><circle cx="11.4" cy="7.5" r="6" fill="#fafafa" stroke="#323130" stroke-width="1.15"/><path d="M7 11.9L0.6 18.3" stroke="#323130" stroke-width="1.25"/></svg>
<svg class="b" style="left:1051px;top:45px;" width="21" height="20" viewBox="0 0 21 20" fill="none"><path d="M1.6 11.5V1.6H16.8" stroke="#323130" stroke-width="1.2"/><path d="M3.6 13.5V3.6H18.6" stroke="#323130" stroke-width="1.2"/><path d="M12 15.6H5.6V5.6H18.6V10" stroke="#323130" stroke-width="1.2" fill="#fafafa"/><circle cx="12.7" cy="11.2" r="4.1" fill="#fff" stroke="#2b88d8" stroke-width="1.3"/><path d="M15.6 14.2L19.6 18.4" stroke="#2b88d8" stroke-width="1.4"/></svg>
<svg class="b" style="left:1102px;top:44px;" width="16" height="22" viewBox="0 0 16 22" fill="none"><rect x="4.3" y="1.3" width="7.6" height="13.4" rx="3.8" fill="#83beec" stroke="#2b88d8" stroke-width="1.1"/><path d="M1.6 11.2C1.6 15 4.4 17.4 8.1 17.4C11.8 17.4 14.6 15 14.6 11.2" stroke="#605e5c" stroke-width="1.2"/><path d="M8.1 17.4V20.6" stroke="#605e5c" stroke-width="1.3"/></svg>
<svg class="b" style="left:1156px;top:44px;" width="21" height="21" viewBox="0 0 21 21" fill="none"><path d="M12.9 1.3L14.9 2.8L4.1 17.8L1.4 19.7L2 16.4Z" fill="#fff" stroke="#185abd" stroke-width="1.3" stroke-linejoin="round"/><path d="M15 6H18.7M11.6 11.4H15.5M8.2 16.3H12.3" stroke="#185abd" stroke-width="2.9" stroke-linecap="round"/></svg>
<svg class="b" style="left:1207px;top:45px;" width="18" height="20" viewBox="0 0 18 20" fill="none"><path d="M1.6 18.2L8.6 9.8" stroke="#323130" stroke-width="2.1" stroke-linecap="round"/><path d="M1.6 18.2L8.6 9.8" stroke="#fff" stroke-width="0.8" stroke-linecap="round"/><path d="M10.6 4.8C12 5.8 12.2 8 11 9.4C9.8 10.6 8 10.2 7.6 8.8C7.4 7.4 9.6 6.8 10.6 4.8Z" fill="#2b88d8" stroke="#1b5fa8" stroke-width=".6"/><path d="M10.6 0.4V2.4M7.4 1.6L8.4 3M13.8 1.6L12.9 3M14.2 6H16.2M13.6 9.2L15 10.2" stroke="#605e5c" stroke-width="1"/></svg>
<svg class="b" style="left:908px;top:10px;" width="15" height="15" viewBox="0 0 15 15" fill="none"><path d="M0.7 0.9H13.3V9.9H5.6L2.6 12.9V9.9H0.7Z" stroke="#185abd" stroke-width="1.3" stroke-linejoin="round"/></svg>
<svg class="b" style="left:1022px;top:10px;" width="17" height="14" viewBox="0 0 17 14" fill="none"><path d="M1.4 6.4H4L6.2 2L9.6 11.4L11.8 6.4H15" stroke="#185abd" stroke-width="1.4" stroke-linejoin="round"/><circle cx="1.6" cy="6.4" r="1.5" fill="#185abd"/><circle cx="15" cy="6.4" r="1.5" fill="#185abd"/></svg>
<svg class="b" style="left:1123px;top:8px;" width="18" height="18" viewBox="0 0 18 18" fill="none"><path d="M12.4 1.6C13.4 0.6 15 0.6 16 1.6C17 2.6 17 4.2 16 5.2L5 16.2L1 17.2L2 13.2Z" stroke="#185abd" stroke-width="1.4" stroke-linejoin="round"/><path d="M11.2 2.8L14.8 6.4" stroke="#185abd" stroke-width="1.3"/></svg>
<svg class="b" style="left:1229px;top:9px;" width="17" height="17" viewBox="0 0 17 17" fill="none"><path d="M5 4.6H1.2V15.6H12.6V12.6" stroke="#fff" stroke-width="1.4"/><path d="M10 1.2L15.4 5.8L10 10.4V7.6C7 7.6 5.4 8.8 4.4 10.8C4.6 7 6.6 4.4 10 4V1.2Z" stroke="#fff" stroke-width="1.3" stroke-linejoin="round"/></svg>
<svg class="b" style="left:471px;top:57px;" width="15" height="20" viewBox="0 0 15 20" fill="none"><path d="M3.9 1.4L8.7 13.8M10.1 1.4L4.9 13.8" stroke="#323130" stroke-width="1.05"/><path d="M3 13.9L1.5 16.4L3 18.9M4.3 13.9L5.8 16.4L4.3 18.9M10.4 13.9L8.9 16.4L10.4 18.9M11.7 13.9L13.2 16.4L11.7 18.9" stroke="#2b88d8" stroke-width="1.05"/></svg>
<svg class="b" style="left:468px;top:89px;" width="20" height="20" viewBox="0 0 20 20" fill="none"><path d="M7.2 15.6H1.1V1.1H7.4L9.4 3.2" stroke="#323130" stroke-width="1.15" fill="#f3f2f1"/><path d="M7.2 4.7H14.2L18.8 9.4V18.7H7.2Z" fill="#f3f2f1" stroke="#323130" stroke-width="1.15" stroke-linejoin="round"/><path d="M14.2 4.7V9.4H18.8" stroke="#323130" stroke-width="1.1"/><path d="M10.2 12.3H16.2M10.2 15.3H16.2" stroke="#323130" stroke-width="1.05"/></svg>
<svg class="b" style="left:470.8px;top:122.6px;" width="18" height="20" viewBox="0 0 18 20" fill="none"><path d="M7.6 16.2H1.1V2.2H13.8V5.6" stroke="#de6c00" stroke-width="1.2"/><path d="M3.9 4.9V2.3H5.9C5.9 1.2 6.7 0.6 7.5 0.6C8.3 0.6 9.1 1.2 9.1 2.3H11.1V4.9Z" fill="#fff" stroke="#605e5c" stroke-width="1"/></svg>
<div class="b" style="left:479px;top:129.3px;width:9px;height:11.4px;background:#fafafa;border:1.15px solid #323130;"></div>
<svg class="b" style="left:470.8px;top:154.6px;" width="18" height="20" viewBox="0 0 18 20" fill="none"><path d="M7.6 16.2H1.1V2.2H13.8V5.6" stroke="#de6c00" stroke-width="1.2"/><path d="M3.9 4.9V2.3H5.9C5.9 1.2 6.7 0.6 7.5 0.6C8.3 0.6 9.1 1.2 9.1 2.3H11.1V4.9Z" fill="#fff" stroke="#605e5c" stroke-width="1"/></svg>
<span class="t" style="letter-spacing:0.262px;top:158.46px;font-size:13.4px;line-height:19px;color:#484644;left:478.80px;">A</span>
<svg class="b" style="left:468px;top:190px;" width="20" height="18" viewBox="0 0 20 18" fill="none"><path d="M6.3 1.5H19M1 5.3H19M1 9.5H9M1 13.6H9" stroke="#323130" stroke-width="1.1"/></svg>
<span class="t" style="letter-spacing:1.394px;top:192.62px;font-size:11.5px;line-height:16px;color:#323130;left:479.20px;font-weight:700;">¶</span>
<svg class="b" style="left:468px;top:260px;" width="20" height="20" viewBox="0 0 20 20" fill="none"><path d="M4.4 1.4V8.8M1.2 4.6L4.4 1.2L7.6 4.6M4.4 11.2V18.6M1.2 15.4L4.4 18.8L7.6 15.4" stroke="#2b88d8" stroke-width="1.15"/><path d="M10.2 1.5H19M10.2 5.5H19M10.2 9.5H19M10.2 13.6H19M10.2 17.4H19" stroke="#323130" stroke-width="1.1"/></svg>
<span class="t" style="letter-spacing:-0.753px;top:295.05px;font-size:14.3px;line-height:20px;color:#185abd;left:469.30px;">a</span>
<span class="t" style="top:290.26px;font-size:10.5px;line-height:15px;color:#107c10;left:477.80px;font-weight:700;font-family:'Liberation Sans','Noto Sans CJK JP',sans-serif;">あ</span>
<svg class="b" style="left:468px;top:292px;" width="20" height="20" viewBox="0 0 20 20" fill="none"><path d="M2 3.8H7.8L6.2 5.4L9 7.2V9.2H7L5.2 6.4L3.6 8V9.2H2Z" fill="#185abd"/><path d="M18.8 17.8H13L14.6 16.2L11.6 14.2L13.2 12.4L16 14.6L17.6 13L18.8 11.8Z" fill="#107c10"/></svg>
<svg class="b" style="left:467px;top:325px;" width="24" height="20" viewBox="0 0 24 20" fill="none"><path d="M10 15H1.7V1.9H8.6L10.5 3.9L12.4 1.9H19.5V8" stroke="#323130" stroke-width="1.1"/><path d="M3.6 9.1L6.8 12.1L12.1 5.6" stroke="#1f9d45" stroke-width="1.5"/><circle cx="15.4" cy="13" r="5.5" fill="#2b88d8"/><path d="M10 13H20.8M15.4 7.6V18.4M11.2 10H19.6M11.2 16H19.6" stroke="#fff" stroke-width=".8"/><ellipse cx="15.4" cy="13" rx="2.5" ry="5.3" stroke="#fff" stroke-width=".8"/></svg>
<svg class="b" style="left:467.6px;top:355.6px;" width="20.0" height="18.5" viewBox="0 0 20 18.5" fill="none"><path d="M2 5.1V2.9H19.3V13.6H8.4L4.9 17.8V13.6H2Z" fill="#fbfbfb" stroke="none"/><path d="M11.6 2.9H19.3V13.6H8.4L4.9 17.8V13.6H2V7.4" stroke="#323130" stroke-width="1.10"/><path d="M4.8 0.4V9.6M0.3 5.1H9.4" stroke="#1f9d45" stroke-width="1.30"/></svg>
<svg class="b" style="left:466px;top:394px;" width="24" height="23" viewBox="0 0 24 23" fill="none"><path d="M18.6 2.2C19.6 1.2 21.2 1.2 22.2 2.2C23.2 3.2 23.2 4.8 22.2 5.8L8 19.4L1.6 22L4.4 15.8Z" fill="#fff" stroke="#484644" stroke-width="1.2" stroke-linejoin="round"/><path d="M4.4 15.8C5.8 15.6 7.8 17.4 8 19.4M18 2.9L21.6 6.4" stroke="#484644" stroke-width="1.1"/></svg>
<svg class="b" style="left:468px;top:436.5px;" width="20" height="20" viewBox="0 0 20 20" fill="none"><path d="M7.4 11.9L0.7 18.6" stroke="#2b88d8" stroke-width="1.3"/><circle cx="12.4" cy="7" r="6.1" fill="#fff" stroke="#2b88d8" stroke-width="1.25"/><path d="M12.4 6V10.4" stroke="#323130" stroke-width="1.2"/><circle cx="12.4" cy="3.9" r=".8" fill="#323130"/></svg>
<svg class="b" style="left:552px;top:560px;" width="20" height="15" viewBox="0 0 20 15" fill="none"><path d="M11.4 1.8C12.2 1 13.6 1 14.6 2C15.6 3 15.8 4.2 14.8 5.2L7.8 11.4L4.6 8.6Z" fill="#fff" stroke="#605e5c" stroke-width="1.1" stroke-linejoin="round"/><path d="M4.6 8.6L3.4 11.4L1.8 13.6H5.8L7.8 11.4Z" fill="#605e5c" stroke="#605e5c" stroke-width=".8" stroke-linejoin="round"/></svg>
<svg class="b" style="left:812.6px;top:526px;" width="24.0" height="22.2" viewBox="0 0 20 18.5" fill="none"><path d="M2 5.1V2.9H19.3V13.6H8.4L4.9 17.8V13.6H2Z" fill="#fbfbfb" stroke="none"/><path d="M11.6 2.9H19.3V13.6H8.4L4.9 17.8V13.6H2V7.4" stroke="#323130" stroke-width="0.92"/><path d="M4.8 0.4V9.6M0.3 5.1H9.4" stroke="#1f9d45" stroke-width="1.08"/></svg>
<svg class="b" style="left:1001.75px;top:192.2px;" width="15.2" height="14.06" viewBox="0 0 20 18.5" fill="none"><path d="M2 5.1V2.9H19.3V13.6H8.4L4.9 17.8V13.6H2Z" fill="#fbfbfb" stroke="none"/><path d="M11.6 2.9H19.3V13.6H8.4L4.9 17.8V13.6H2V7.4" stroke="#323130" stroke-width="1.45"/><path d="M4.8 0.4V9.6M0.3 5.1H9.4" stroke="#1f9d45" stroke-width="1.71"/></svg>
<div class="b" style="left:799px;top:595.6px;width:3.6px;height:3.6px;border:1px solid #323130;border-radius:50%;"></div>
</div>
</body></html>
